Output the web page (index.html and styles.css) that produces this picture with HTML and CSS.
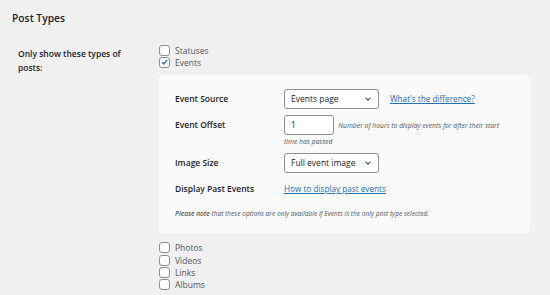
FILE: index.html
```html
<!DOCTYPE html>
<html lang="en">

<head>
    <meta charset="UTF-8">
    <meta name="viewport" content="width=device-width, initial-scale=1.0">
    <title>Post Types</title>
    <link rel="stylesheet" href="styles.css">
</head>

<body>
    <main class="page">
        <h2 class="section-title">Post Types</h2>
        <div class="field-row">
            <div class="field-label">Only show these types of posts:</div>
            <div class="field-value">
                <label class="check"><span class="box"></span>Statuses</label>
                <label class="check"><span class="box checked">
                        <svg viewBox="0 0 10 10" width="10" height="10">
                            <path d="M2.2 5.2 L4.2 7.2 L8 2.6" fill="none" stroke="#2271b1" stroke-width="1.4" />
                        </svg>
                    </span>Events</label>

                <section class="events-panel">
                    <div class="panel-grid">
                        <div class="p-label">Event Source</div>
                        <div class="p-value">
                            <div class="select">Events page<span class="chev"></span></div>
                            <a href="#" class="link">What's the difference?</a>
                        </div>

                        <div class="p-label top">Event Offset</div>
                        <div class="p-value wrap">
                            <div class="text-input">1</div>
                            <span class="hint">Number of hours to display events for after their start</span>
                            <span class="hint">time has passed</span>
                        </div>

                        <div class="p-label">Image Size</div>
                        <div class="p-value">
                            <div class="select">Full event image<span class="chev"></span></div>
                        </div>

                        <div class="p-label">Display Past Events</div>
                        <div class="p-value">
                            <a href="#" class="link">How to display past events</a>
                        </div>
                    </div>
                    <p class="note"><strong>Please note</strong> that these options are only available if Events is the only post type selected.</p>
                </section>

                <label class="check"><span class="box"></span>Photos</label>
                <label class="check"><span class="box"></span>Videos</label>
                <label class="check"><span class="box"></span>Links</label>
                <label class="check"><span class="box"></span>Albums</label>
            </div>
        </div>
    </main>
</body>

</html>
```

FILE: styles.css
```css
:root {
    --text: #1d2327;
    --muted: #50575e;
    --link: #2271b1;
    --border: #8c8f94;
}

body {
    margin: 0;
    padding: 0;
    background: #f0f0f1;
    font-family: "Open Sans", sans-serif;
    font-size: 8.5px;
    color: var(--text);
}

.page {
    padding: 8px 12px 0 12px;
}

.section-title {
    margin: 0;
    font-size: 10.3px;
    font-weight: 600;
    line-height: 20px;
}

.field-row {
    display: flex;
    margin-top: 16px;
}

.field-label {
    width: 110px;
    padding-left: 6px;
    padding-top: 3px;
    margin-right: 31px;
    font-weight: 600;
    line-height: 14px;
}

.field-value {
    display: flex;
    flex-direction: column;
}

.check {
    display: flex;
    align-items: center;
    gap: 5px;
    height: 12.3px;
    color: var(--muted);
}

.box {
    width: 9px;
    height: 9px;
    border: 1px solid var(--border);
    border-radius: 3px;
    background: #fff;
    display: flex;
    align-items: center;
    justify-content: center;
}

.box svg {
    display: block;
}

.events-panel {
    width: 339px;
    margin: 6px 0 9px 0;
    padding: 14px 16px 15px 16px;
    background: #fafafa;
    border-radius: 5px;
}

.panel-grid {
    display: grid;
    grid-template-columns: 109px 1fr;
    row-gap: 6px;
    align-items: center;
}

.p-label {
    font-weight: 600;
    line-height: 20px;
}

.p-label.top {
    align-self: start;
}

.p-value {
    display: flex;
    align-items: center;
    gap: 11px;
}

.p-value.wrap {
    display: block;
    max-width: 220px;
    line-height: 11px;
}

.select {
    position: relative;
    box-sizing: border-box;
    width: 95px;
    height: 20px;
    padding-left: 6px;
    line-height: 18px;
    border: 1px solid var(--border);
    border-radius: 3px;
    background: #fff;
}

.chev {
    position: absolute;
    right: 8px;
    top: 6px;
    width: 3px;
    height: 3px;
    border-right: 1px solid #3c434a;
    border-bottom: 1px solid #3c434a;
    transform: rotate(45deg);
}

.text-input {
    display: inline-block;
    vertical-align: middle;
    box-sizing: border-box;
    width: 50px;
    height: 20px;
    padding-left: 6px;
    line-height: 18px;
    border: 1px solid var(--border);
    border-radius: 3px;
    background: #fff;
    margin-right: 2px;
}

.hint {
    font-style: italic;
    font-size: 6.8px;
    color: var(--muted);
    vertical-align: middle;
}

.link {
    color: var(--link);
    text-decoration: underline;
    font-size: 8.2px;
}

.note {
    margin: 10px 0 0 0;
    font-style: italic;
    font-size: 6.6px;
    line-height: 9px;
    color: var(--muted);
}

.note strong {
    font-weight: 600;
}
```
